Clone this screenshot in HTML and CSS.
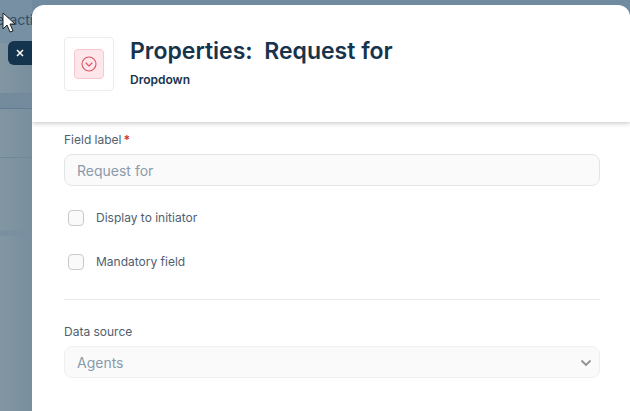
FILE: index.html
```html
<!DOCTYPE html>
<html lang="en">

<head>
    <meta charset="UTF-8">
    <meta name="viewport" content="width=device-width, initial-scale=1.0">
    <title>Field properties</title>
    <link rel="stylesheet" href="styles.css">
</head>

<body>
    <div class="page-behind" aria-hidden="true">
        <div class="page-title">eracti</div>
        <div class="page-toolbar"></div>
        <div class="page-tabs"></div>
        <div class="page-row"></div>
        <div class="page-panel"></div>
        <div class="page-footer"></div>
    </div>

    <button type="button" class="close-btn" aria-label="Close">
        <svg width="8" height="8" viewBox="0 0 8 8">
            <path d="M1 1l6 6M7 1L1 7" fill="none" stroke="#fff" stroke-width="1.5" />
        </svg>
    </button>

    <main class="drawer">
        <header class="drawer-header">
            <div class="field-icon">
                <div class="field-icon-inner">
                    <svg width="16" height="16" viewBox="0 0 16 16" fill="none" stroke="#dc5560" stroke-width="1.1">
                        <circle cx="8" cy="8" r="7" />
                        <path d="M5 7l3 3 3-3" stroke-linecap="round" stroke-linejoin="round" />
                    </svg>
                </div>
            </div>
            <div>
                <h1>Properties:&nbsp; Request for</h1>
                <p class="field-type">Dropdown</p>
            </div>
        </header>

        <form class="drawer-body">
            <div class="form-group">
                <label for="field-label">Field label<span class="required">*</span></label>
                <input type="text" class="control" id="field-label" placeholder="Request for">
            </div>
            <div class="check-group">
                <input type="checkbox" id="display-initiator">
                <label for="display-initiator">Display to initiator</label>
            </div>
            <div class="check-group">
                <input type="checkbox" id="mandatory">
                <label for="mandatory">Mandatory field</label>
            </div>
            <hr>
            <div class="form-group">
                <label for="data-source">Data source</label>
                <div class="select-wrap">
                    <select class="control control-light" id="data-source">
                        <option>Agents</option>
                    </select>
                    <svg class="chevron" width="12" height="8" viewBox="0 0 12 8">
                        <path d="M1.5 1.5L6 6l4.500-4.500" fill="none" stroke="#8f9193" stroke-width="1.800" />
                    </svg>
                </div>
            </div>
        </form>
    </main>

    <svg class="cursor" width="14" height="22" viewBox="0 0 14 22">
        <path d="M1 1v16l4-4 3 7 3-1-3-7h5z" fill="#fff" stroke="#222" stroke-width="1" />
    </svg>
</body>

</html>
```

FILE: styles.css
```css
* {
    box-sizing: border-box;
}

body {
    margin: 0;
    min-height: 100vh;
    padding: 5px 0 0 32px;
    display: flex;
    overflow: hidden;
    background-color: #708ba0;
    font-family: Inter, "Liberation Sans", sans-serif;
    font-size: 12px;
    line-height: 16px;
    color: #4f6070;
}

/* dimmed page on the left of the drawer */
.page-behind {
    position: absolute;
    top: 0;
    left: 0;
    width: 32px;
    height: 100%;
    display: flex;
    flex-direction: column;
    overflow: hidden;
    background: linear-gradient(to right, #8297a2, #788e9e);
}

.page-title {
    height: 43px;
    padding-top: 10px;
    text-indent: -4px;
    font-size: 14px;
    line-height: 20px;
    color: #304e66;
    background-color: #7790a3;
}

.page-toolbar {
    height: 51px;
    border-bottom: 1px solid #71899b;
}

.page-tabs {
    height: 15px;
    background-color: #748b9e;
    border-bottom: 1px solid #627d91;
}

.page-row {
    height: 49px;
    border-bottom: 1px solid #6e8799;
}

.page-panel {
    height: 72px;
}

.page-footer {
    height: 6px;
    background-color: #7a8fa0;
}

.close-btn {
    position: absolute;
    top: 41px;
    left: 8px;
    width: 24px;
    height: 24px;
    padding: 0;
    display: flex;
    align-items: center;
    justify-content: center;
    border: none;
    border-radius: 6px 0 0 6px;
    background-color: #14334c;
    cursor: pointer;
}

.drawer {
    position: relative;
    flex: 1;
    overflow: hidden;
    background-color: #fff;
    border-radius: 12px 12px 0 0;
}

.drawer-header {
    display: flex;
    gap: 16px;
    padding: 32px 30px 31px 32px;
    box-shadow: 0 1px 5px rgba(0, 0, 0, 0.25);
}

.field-icon {
    width: 50px;
    height: 54px;
    display: flex;
    align-items: center;
    justify-content: center;
    border: 1px solid #ececee;
    border-radius: 4px;
}

.field-icon-inner {
    width: 30px;
    height: 30px;
    display: flex;
    align-items: center;
    justify-content: center;
    background-color: #ffe6ea;
    border: 1px solid #f8c8ce;
    border-radius: 4px;
}

h1 {
    margin: 0;
    font-size: 23px;
    line-height: 28px;
    font-weight: 600;
    color: #17344c;
}

.field-type {
    margin: 7px 0 0;
    font-weight: 600;
    color: #17344c;
}

.drawer-body {
    padding: 10px 30px 32px 32px;
}

.form-group label {
    display: block;
    margin-bottom: 6px;
}

.required {
    margin-left: 2px;
    font-weight: 700;
    color: #d13438;
}

.control {
    display: block;
    width: 100%;
    height: 32px;
    padding: 0 12px;
    border: 1px solid #e3e4e6;
    border-radius: 8px;
    background-color: #fafafa;
    font-family: inherit;
    font-size: 14px;
    color: #8b9aaa;
    appearance: none;
}

.control::placeholder {
    color: #8b9aaa;
}

.control-light {
    border-color: #f0f0f1;
}

.check-group {
    display: flex;
    align-items: center;
    gap: 12px;
    margin: 24px 4px 0;
}

.check-group + .check-group {
    margin-top: 28px;
}

.check-group input {
    width: 16px;
    height: 16px;
    margin: 0;
    border: 1px solid #c9cacc;
    border-radius: 4px;
    background-color: #fafafa;
    appearance: none;
}

.check-group input:checked {
    background-color: #17344c;
}

hr {
    margin: 29px 0 24px;
    border: none;
    border-top: 1px solid #e9eaec;
}

.select-wrap {
    position: relative;
}

.chevron {
    position: absolute;
    top: 13px;
    right: 8px;
    pointer-events: none;
}

.cursor {
    position: absolute;
    top: 12px;
    left: 2px;
    pointer-events: none;
}
```
